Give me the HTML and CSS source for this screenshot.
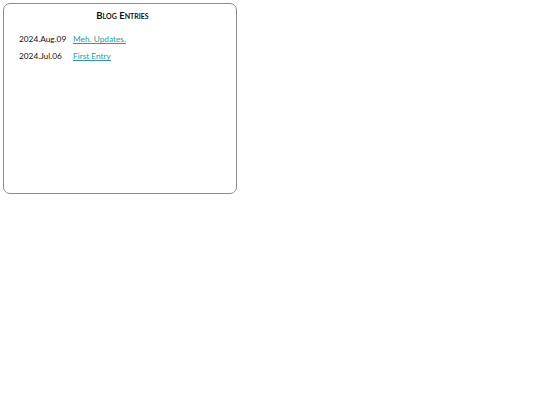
FILE: index.html
```html
<!DOCTYPE html>
<html>
<head>
<meta charset="utf-8">
<link rel="stylesheet" href="styles.css">
</head>
<body>
<div class="box">
  <h1 class="title">Blog Entries</h1>
  <ul class="entries">
    <li class="entry"><span class="date">2024.Aug.09</span><a class="link" href="#">Meh. Updates.</a></li>
    <li class="entry"><span class="date">2024.Jul.06</span><a class="link" href="#">First Entry</a></li>
  </ul>
</div>
</body>
</html>
```

FILE: styles.css
```css
html, body {
  margin: 0;
  padding: 0;
  background: #fff;
}
body {
  padding: 3px;
  font-family: "Lato", "Noto Sans", sans-serif;
  color: #111;
}
.box {
  box-sizing: border-box;
  width: 234px;
  height: 191px;
  border: 1px solid #8c8c8c;
  border-radius: 7px;
  padding: 0 10px 0 15px;
}
.title {
  margin: 6px 0 0;
  text-align: center;
  font-size: 9.6px;
  font-weight: 700;
  font-variant: small-caps;
  line-height: 12px;
}
.entries {
  list-style: none;
  margin: 9px 0 0;
  padding: 0;
}
.entry {
  display: flex;
  font-size: 8.3px;
  line-height: 17px;
  font-weight: 400;
}
.date {
  width: 54px;
}
.link {
  color: #2a9a9e;
  text-decoration: underline;
}
```
